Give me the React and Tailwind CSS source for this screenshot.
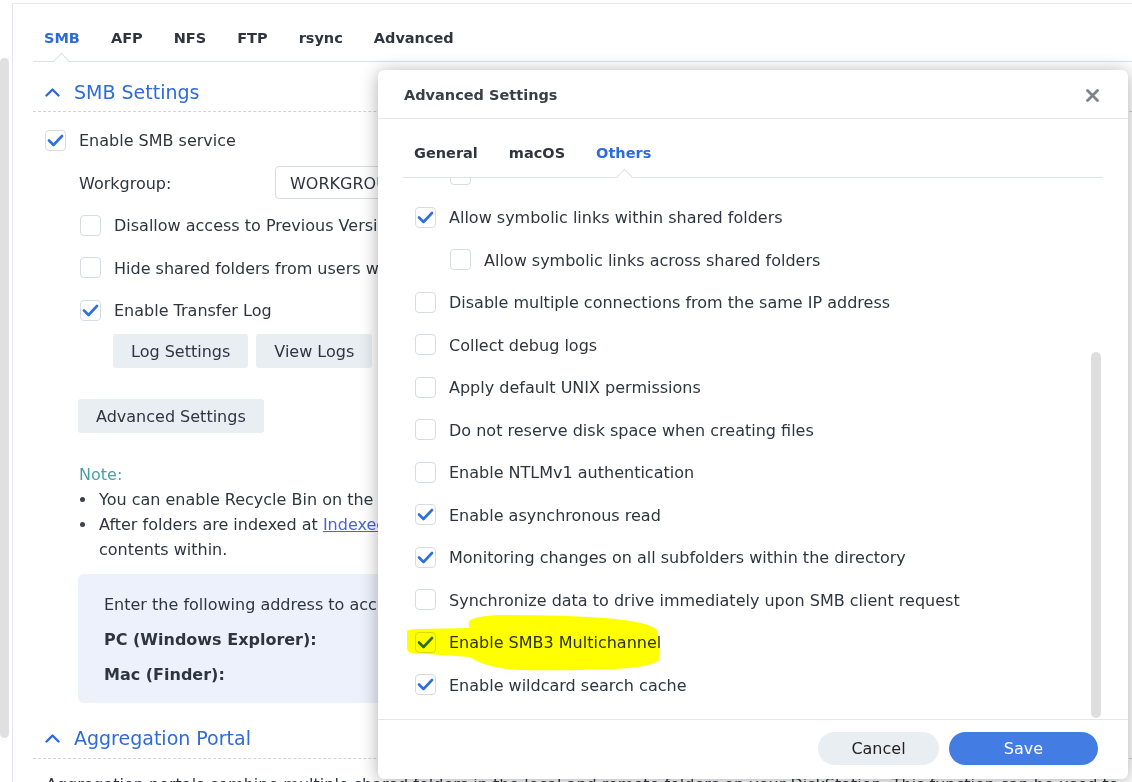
import React from "react";

const Check = () => (
  <svg width="21" height="21" viewBox="0 0 21 21" className="absolute -left-px -top-px">
    <polyline
      points="4,10.5 8.5,15 17,6"
      fill="none"
      stroke="#2f6fde"
      strokeWidth="2.6"
      strokeLinecap="round"
      strokeLinejoin="round"
    />
  </svg>
);

const Box = ({ checked }) => (
  <span className="relative w-[21px] h-[21px] shrink-0 rounded-[4px] border border-[#d6dce4] bg-white">
    {checked && <Check />}
  </span>
);

const Row = ({ checked, label, className = "", textClass = "pt-[2px]" }) => (
  <div className={"h-[42.5px] flex items-center gap-[13px] whitespace-nowrap " + className}>
    <Box checked={checked} />
    <span className={"text-[16px] " + textClass}>{label}</span>
  </div>
);

const Chevron = () => (
  <svg width="15" height="9" viewBox="0 0 15 9" className="shrink-0">
    <polyline points="1.5,7.5 7.5,1.5 13.5,7.5" fill="none" stroke="#2d6bdb" strokeWidth="2.4" strokeLinecap="round" strokeLinejoin="round" />
  </svg>
);

const otherItems = [
  { label: "Enable durable handles", checked: false, indent: true, partial: true },
  { label: "Allow symbolic links within shared folders", checked: true },
  { label: "Allow symbolic links across shared folders", checked: false, indent: true },
  { label: "Disable multiple connections from the same IP address", checked: false },
  { label: "Collect debug logs", checked: false },
  { label: "Apply default UNIX permissions", checked: false },
  { label: "Do not reserve disk space when creating files", checked: false },
  { label: "Enable NTLMv1 authentication", checked: false },
  { label: "Enable asynchronous read", checked: true },
  { label: "Monitoring changes on all subfolders within the directory", checked: true },
  { label: "Synchronize data to drive immediately upon SMB client request", checked: false },
  { label: "Enable SMB3 Multichannel", checked: true },
  { label: "Enable wildcard search cache", checked: true },
];

const App = () => {
  return (
    <div className="relative w-[1132px] h-[782px] overflow-hidden bg-white font-['DejaVu_Sans',sans-serif] text-[#2f353f]">
      <div className="flex h-full pt-[3px]">
        {/* page scrollbar */}
        <div className="w-[12px] shrink-0 pt-[55px]">
          <div className="w-[9px] h-[680px] rounded-full bg-[#e0e0e0]" />
        </div>

        <div className="flex-1 border-l border-t border-[#e3e6ea] pl-[20px]">
          {/* service tabs */}
          <div className="relative h-[58px] pt-[13px] border-b border-[#dde2e9] flex items-center gap-[31px] pl-[11px] text-[14.5px] font-bold">
            <span className="text-[#2d6bdb]">SMB</span>
            <span>AFP</span>
            <span>NFS</span>
            <span>FTP</span>
            <span>rsync</span>
            <span>Advanced</span>
            <span className="absolute left-[23px] top-[51px] w-[11px] h-[11px] rotate-45 bg-white border-l border-t border-[#dde2e9]" />
          </div>

          {/* SMB Settings header */}
          <div className="h-[50px] pt-[11px] border-b border-dashed border-[#cfd4db] flex items-center gap-[14px] pl-[12px]">
            <Chevron />
            <span className="text-[19px] text-[#2d6bdb]">SMB Settings</span>
          </div>

          <div className="pl-[12px] mt-[6.75px]">
            <Row checked label="Enable SMB service" />
            <div className="h-[42.5px] flex items-center pl-[34px] text-[16px]">
              <span className="w-[196px] pt-[2px]">Workgroup:</span>
              <div className="w-[320px] h-[33px] rounded-[4px] border border-[#d6dce4] flex items-center pl-[14px] pt-[2px]">
                WORKGROUP
              </div>
            </div>
            <Row className="pl-[35px]" label="Disallow access to Previous Versions" />
            <Row className="pl-[35px]" label="Hide shared folders from users without permissions" />
            <Row className="pl-[35px]" checked label="Enable Transfer Log" />
            <div className="flex gap-[8px] pl-[68px] mt-[2.75px] text-[16px]">
              <button className="h-[34px] px-[18px] pt-[2px] rounded-[3px] bg-[#e9eef3]">Log Settings</button>
              <button className="h-[34px] px-[18px] pt-[2px] rounded-[3px] bg-[#e9eef3]">View Logs</button>
            </div>
            <div className="pl-[33px] mt-[31px] text-[16px]">
              <button className="h-[34px] px-[18px] pt-[2px] rounded-[3px] bg-[#e9eef3]">Advanced Settings</button>
            </div>

            <div className="pl-[34px] mt-[28.5px] text-[16px] leading-[25px]">
              <div className="text-[#4aa0a6]">Note:</div>
              <div className="flex">
                <span className="w-[20px] shrink-0 flex justify-start pt-[10px] pl-[1px]">
                  <span className="w-[5px] h-[5px] rounded-full bg-[#3b414b]" />
                </span>
                <span className="whitespace-nowrap">You can enable Recycle Bin on the settings page of each shared folder.</span>
              </div>
              <div className="flex">
                <span className="w-[20px] shrink-0 flex justify-start pt-[10px] pl-[1px]">
                  <span className="w-[5px] h-[5px] rounded-full bg-[#3b414b]" />
                </span>
                <span className="whitespace-nowrap">
                  After folders are indexed at <span className="underline text-[#4a63d6]">Indexed Folder List</span>, you can search the file names and
                  <br />
                  contents within.
                </span>
              </div>
            </div>

            <div className="ml-[33px] mt-[12.5px] w-[900px] h-[129px] rounded-[6px] bg-[#edf1fb] pl-[26px] pt-[19px] flex flex-col gap-[11px] text-[16px] leading-[24px] whitespace-nowrap">
              <div>Enter the following address to access shared folders on your DiskStation:</div>
              <div className="font-bold">PC (Windows Explorer):</div>
              <div className="font-bold">Mac (Finder):</div>
            </div>
          </div>

          {/* Aggregation Portal */}
          <div className="mt-[15px] h-[41px] border-b border-dashed border-[#cfd4db] flex items-center gap-[14px] pl-[12px]">
            <Chevron />
            <span className="text-[19px] text-[#2d6bdb] pt-[1px]">Aggregation Portal</span>
          </div>
          <div className="pl-[13px] mt-[14px] text-[16px] leading-[24px] whitespace-nowrap">
            Aggregation portals combine multiple shared folders in the local and remote folders on your DiskStation. This function can be used to
          </div>
        </div>
      </div>

      {/* Advanced Settings dialog */}
      <div className="absolute left-[378px] top-[70px] w-[750px] h-[709px] rounded-[6px] bg-white shadow-[0_2px_18px_rgba(0,0,0,0.32)] flex flex-col">
        <div className="h-[49px] shrink-0 border-b border-[#e3e6ec] flex items-center justify-between pl-[26px] pr-[29px] pt-[3px]">
          <span className="text-[14.5px] font-bold text-[#3a3f47]">Advanced Settings</span>
          <svg width="13" height="13" viewBox="0 0 13 13">
            <path d="M1.5 1.5 L11.5 11.5 M11.5 1.5 L1.5 11.5" stroke="#7b848e" strokeWidth="2.8" strokeLinecap="round" />
          </svg>
        </div>

        <div className="relative shrink-0 mx-[25px] h-[59px] pt-[11px] border-b border-[#dfe3ea] flex items-center gap-[31px] pl-[11px] text-[14.5px] font-bold">
          <span>General</span>
          <span>macOS</span>
          <span className="text-[#2d6bdb]">Others</span>
          <span className="absolute left-[216px] top-[52px] w-[11px] h-[11px] rotate-45 bg-white border-l border-t border-[#dfe3ea]" />
        </div>

        <div className="relative flex-1 overflow-hidden">
          <div className="pl-[37px] mt-[-24.75px]">
            {otherItems.map((it, i) => (
              <Row
                key={i}
                checked={it.checked}
                label={it.label}
                className={it.indent ? "pl-[35px]" : ""}
                textClass={it.partial ? "relative -top-[7px]" : "pt-[2px]"}
              />
            ))}
          </div>
          <div className="absolute left-[713px] top-[174px] w-[10px] h-[366px] rounded-full bg-[#dedede]" />
        </div>

        <div className="h-[60px] shrink-0 border-t border-[#e3e6ec] flex justify-end items-start pt-[12px] gap-[10px] pr-[30px] text-[16px]">
          <button className="w-[121px] h-[33px] pt-[1px] rounded-full bg-[#e9eef3] text-[#222]">Cancel</button>
          <button className="w-[149px] h-[33px] pt-[1px] rounded-full bg-[#437de3] text-white">Save</button>
        </div>
      </div>

      {/* yellow highlighter stroke */}
      <svg className="absolute inset-0 w-[1132px] h-[782px] pointer-events-none mix-blend-multiply" viewBox="0 0 1132 782">
        <path
          d="M407 631 Q408 629 420 629 L469 628 L469 621 Q475 616 500 615 Q560 615 605 618 Q650 622 657 630 Q661 645 659 660 Q650 668 610 669 Q560 671 520 670 Q485 668 470 657 L412 653 Q406 652 407 645 Z"
          fill="#ffff00"
        />
      </svg>
    </div>
  );
};

export default App;
